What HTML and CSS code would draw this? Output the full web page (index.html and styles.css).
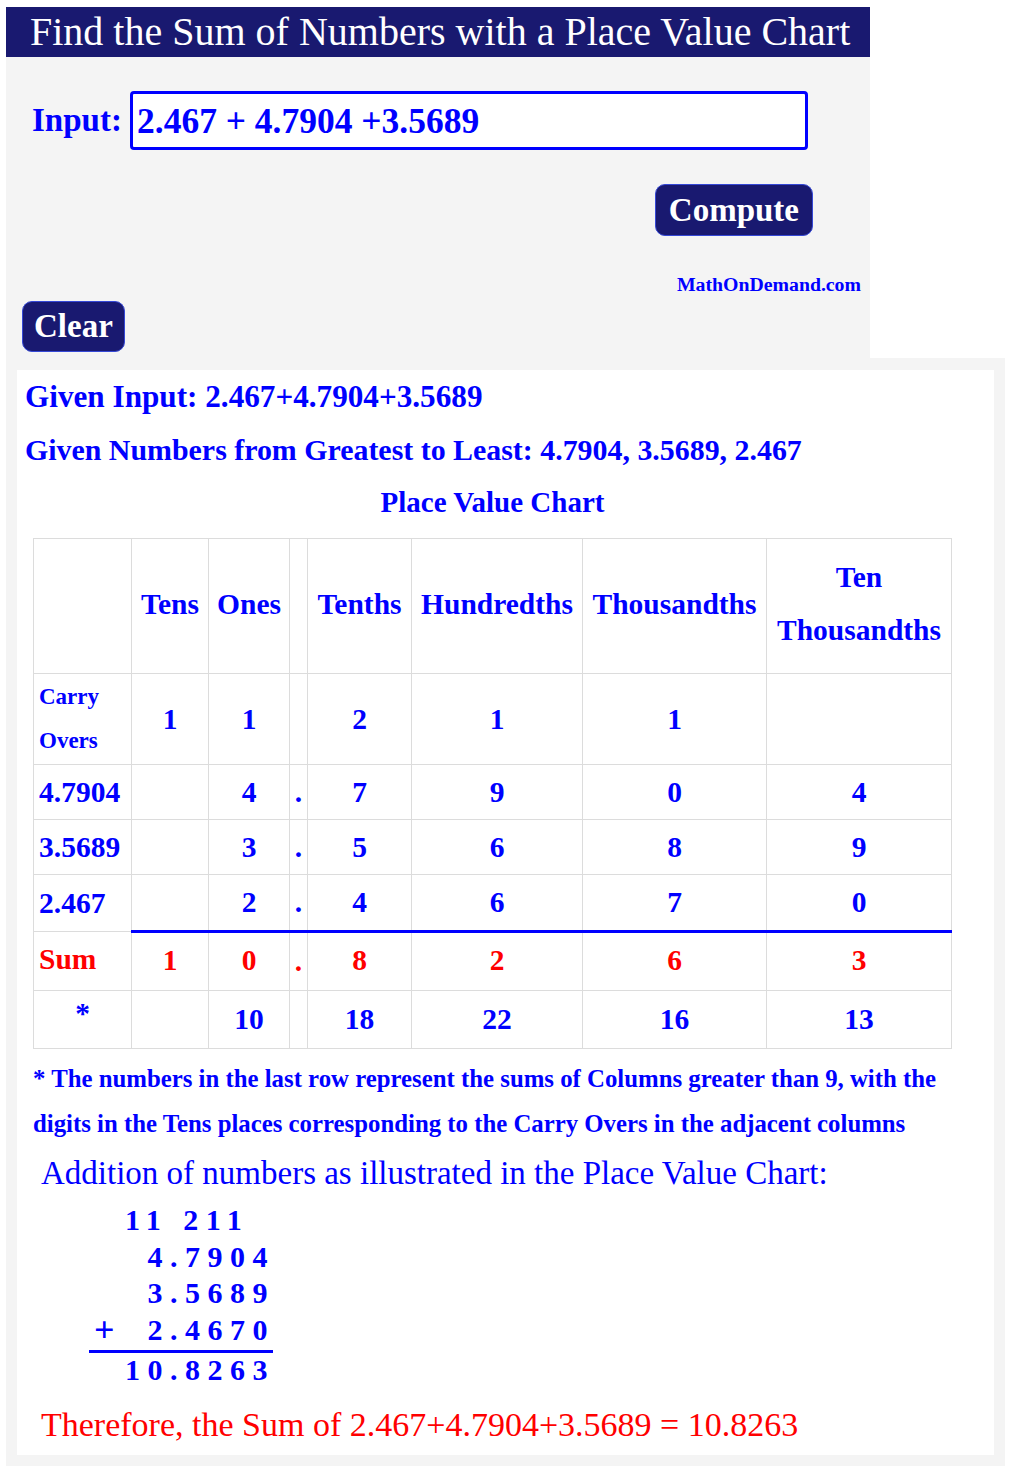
FILE: index.html
```html
<!DOCTYPE html>
<html lang="en">
<head>
<meta charset="utf-8">
<title>Find the Sum of Numbers with a Place Value Chart</title>
<link rel="stylesheet" href="styles.css">
</head>
<body>
<div class="top">
  <div class="title">Find the Sum of Numbers with a Place Value Chart</div>
  <div class="input-row">
    <label class="input-label" for="expr">Input:</label>
    <input id="expr" class="expr" type="text" value="2.467 + 4.7904 +3.5689">
  </div>
  <div class="compute-row"><button class="btn compute" type="button">Compute</button></div>
  <div class="site">MathOnDemand.com</div>
  <div class="clear-row"><button class="btn clear" type="button">Clear</button></div>
</div>
<div class="result">
  <div class="result-inner">
    <div class="given given-input">Given Input: 2.467+4.7904+3.5689</div>
    <div class="given given-order">Given Numbers from Greatest to Least: 4.7904, 3.5689, 2.467</div>
    <table class="chart">
      <caption>Place Value Chart</caption>
      <colgroup>
        <col class="c-label"><col class="c-tens"><col class="c-ones"><col class="c-dot">
        <col class="c-tenths"><col class="c-hund"><col class="c-thou"><col class="c-tthou">
      </colgroup>
      <tr class="r-head">
        <th></th><th>Tens</th><th>Ones</th><th></th><th>Tenths</th><th>Hundredths</th><th>Thousandths</th><th>Ten Thousandths</th>
      </tr>
      <tr class="r-carry">
        <td class="lbl carry-lbl">Carry Overs</td><td>1</td><td>1</td><td></td><td>2</td><td>1</td><td>1</td><td></td>
      </tr>
      <tr class="r-num">
        <td class="lbl">4.7904</td><td></td><td>4</td><td class="dot">.</td><td>7</td><td>9</td><td>0</td><td>4</td>
      </tr>
      <tr class="r-num">
        <td class="lbl">3.5689</td><td></td><td>3</td><td class="dot">.</td><td>5</td><td>6</td><td>8</td><td>9</td>
      </tr>
      <tr class="r-num r-last">
        <td class="lbl">2.467</td><td></td><td>2</td><td class="dot">.</td><td>4</td><td>6</td><td>7</td><td>0</td>
      </tr>
      <tr class="r-sum">
        <td class="lbl">Sum</td><td>1</td><td>0</td><td class="dot">.</td><td>8</td><td>2</td><td>6</td><td>3</td>
      </tr>
      <tr class="r-star">
        <td class="star">*</td><td></td><td>10</td><td></td><td>18</td><td>22</td><td>16</td><td>13</td>
      </tr>
    </table>
    <p class="note">* The numbers in the last row represent the sums of Columns greater than 9, with the digits in the Tens places corresponding to the Carry Overs in the adjacent columns</p>
    <div class="addition-title">Addition of numbers as illustrated in the Place Value Chart:</div>
    <div class="calc">
      <div class="sign"></div><div class="digits">11 211</div>
      <div class="sign"></div><div class="digits shift">4.7904</div>
      <div class="sign"></div><div class="digits shift">3.5689</div>
      <div class="sign">+</div><div class="digits shift">2.4670</div>
      <div class="digits total">10.8263</div>
    </div>
    <div class="therefore">Therefore, the Sum of 2.467+4.7904+3.5689 = 10.8263</div>
  </div>
</div>
</body>
</html>
```
FILE: styles.css
```css
body {
  margin: 0;
  background: #ffffff;
  font-family: "Liberation Serif", "Times New Roman", serif;
  color: #0000ff;
}

.top {
  margin: 7px 0 0 6px;
  width: 864px;
  background: #f4f4f4;
}

.title {
  height: 50px;
  line-height: 50px;
  padding-left: 24px;
  background: #191970;
  color: #ffffff;
  font-size: 40px;
  white-space: nowrap;
}

.input-row {
  display: flex;
  align-items: center;
  margin-top: 34px;
  padding-left: 26px;
}

.input-label {
  flex: 0 0 98px;
  font-size: 33px;
  font-weight: bold;
  color: #0000ff;
}

.expr {
  box-sizing: border-box;
  width: 678px;
  height: 59px;
  margin: 0;
  padding: 0 4px;
  border: 3px solid #0000ff;
  border-radius: 4px;
  background: #ffffff;
  color: #0000ff;
  font-family: "Liberation Serif", "Times New Roman", serif;
  font-size: 35.5px;
  font-weight: bold;
  outline: none;
}

.compute-row {
  display: flex;
  justify-content: flex-end;
  margin-top: 34px;
  padding-right: 57px;
}

.btn {
  margin: 0;
  border: 1px solid #3548d6;
  border-radius: 10px;
  background: #191970;
  color: #ffffff;
  font-family: "Liberation Serif", "Times New Roman", serif;
  font-size: 33px;
  font-weight: bold;
  cursor: pointer;
}

.compute {
  height: 52px;
  padding: 0 13px;
}

.clear {
  height: 51px;
  padding: 0 11px;
}

.site {
  margin-top: 36px;
  padding-right: 9px;
  text-align: right;
  font-size: 19.8px;
  line-height: 24px;
  font-weight: bold;
  color: #0000ff;
}

.clear-row {
  margin-top: 5px;
  padding: 0 0 6px 16px;
}

.result {
  box-sizing: border-box;
  width: 999px;
  margin-left: 6px;
  padding: 12px 11px 11px 11px;
  background: #f4f4f4;
}

.result-inner {
  background: #ffffff;
  padding: 0 0 10px 8px;
}

.given {
  font-weight: bold;
  line-height: 53px;
  white-space: nowrap;
}

.given-input {
  font-size: 31.2px;
}

.given-order {
  font-size: 29.9px;
}

.chart {
  border-collapse: collapse;
  table-layout: fixed;
  width: 918px;
  margin-left: 8px;
  font-size: 29.5px;
  font-weight: bold;
  color: #0000ff;
}

.chart caption {
  font-size: 29px;
  line-height: 53px;
  padding-bottom: 9px;
  text-align: center;
}

.c-label { width: 98px; }
.c-tens { width: 77px; }
.c-ones { width: 81px; }
.c-dot { width: 18px; }
.c-tenths { width: 104px; }
.c-hund { width: 171px; }
.c-thou { width: 184px; }
.c-tthou { width: 185px; }

.chart th,
.chart td {
  border: 1px solid #dcdcdc;
  padding: 0 4px;
  text-align: center;
  vertical-align: middle;
  font-weight: bold;
}

.chart .dot {
  padding: 0;
}

.r-head th {
  line-height: 53px;
  height: 130px;
  padding-bottom: 4px;
}

.r-carry td {
  height: 90px;
}

.chart .lbl {
  text-align: left;
  padding-left: 5px;
  padding-right: 0;
  white-space: nowrap;
}

.chart .carry-lbl {
  white-space: normal;
  font-size: 23px;
  line-height: 44px;
}

.r-num td {
  height: 54px;
}

.r-last td {
  height: 55px;
}

.r-sum td {
  height: 54px;
  padding-bottom: 3px;
  color: #ff0000;
}

.r-sum td:not(:first-child) {
  border-top: 3px solid #0000ff;
}

.r-star td {
  height: 57px;
}

.chart .star {
  vertical-align: top;
  height: 51px;
  padding-top: 6px;
}

.note {
  margin: 7px 0 0 8px;
  font-size: 24.8px;
  line-height: 45px;
  font-weight: bold;
}

.addition-title {
  margin: 7px 0 0 16px;
  font-size: 33px;
  line-height: 40px;
  white-space: nowrap;
}

.calc {
  display: grid;
  grid-template-columns: 36px 148px;
  margin: 9px 0 0 64px;
  width: 184px;
  font-size: 30px;
  font-weight: bold;
  line-height: 36.5px;
}

.sign {
  padding-left: 5px;
  font-size: 36px;
  font-weight: bold;
}

.digits {
  letter-spacing: 7.5px;
  white-space: pre;
}

.shift {
  padding-left: 22.5px;
}

.total {
  grid-column: 1 / -1;
  margin-top: 2px;
  padding-left: 36px;
  border-top: 3px solid #0000ff;
  line-height: 34px;
}

.therefore {
  margin: 18px 0 0 16px;
  font-size: 34px;
  line-height: 40px;
  color: #ff0000;
  white-space: nowrap;
}
```
